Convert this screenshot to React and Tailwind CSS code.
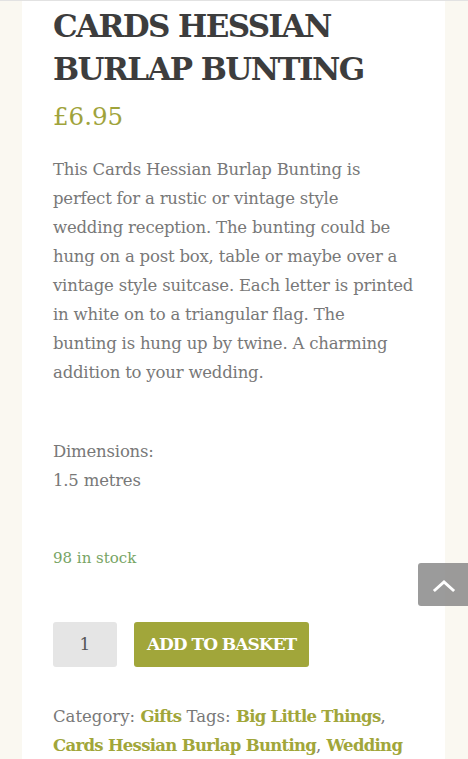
import React from "react";

const description = [
  "This Cards Hessian Burlap Bunting is",
  "perfect for a rustic or vintage style",
  "wedding reception. The bunting could be",
  "hung on a post box, table or maybe over a",
  "vintage style suitcase. Each letter is printed",
  "in white on to a triangular flag. The",
  "bunting is hung up by twine. A charming",
  "addition to your wedding.",
];

export default function App() {
  const serif = { fontFamily: '"DejaVu Serif", "Liberation Serif", serif' };
  return (
    <div className="w-[468px] h-[759px] overflow-hidden bg-[#faf8f1] border-t border-[#e2e2e2] relative" style={serif}>
      <div className="ml-[22px] w-[423px] h-full bg-white pl-[31px] pr-[17px]">
        <h1 className="pt-[4px] text-[31px] leading-[43px] font-bold text-[#3d3d3d] tracking-[-1.6px]">
          CARDS HESSIAN BURLAP BUNTING
        </h1>
        <p className="mt-[8px] text-[24.5px] leading-[36px] text-[#9fa33b]">£6.95</p>
        <p className="mt-[20px] text-[16.5px] leading-[29px] text-[#787878] tracking-[-0.2px]">
          {description.map((line) => (
            <span key={line} className="block whitespace-nowrap">
              {line}
            </span>
          ))}
        </p>
        <p className="mt-[50px] text-[16.5px] leading-[29px] text-[#787878] tracking-[-0.2px]">
          Dimensions:
          <br />
          1.5 metres
        </p>
        <p className="mt-[51px] text-[15px] leading-[24px] text-[#77a464]">98 in stock</p>
        <div className="mt-[52px] flex items-center gap-[17px]">
          <div className="w-[64px] h-[45px] rounded-[3px] bg-[#e5e5e5] flex items-center justify-center text-[17px] text-[#555]">
            1
          </div>
          <button className="h-[45px] w-[175px] rounded-[3px] bg-[#a1a63a] text-white font-bold text-[17px] tracking-[-1px]">
            ADD TO BASKET
          </button>
        </div>
        <p className="mt-[35px] text-[16.5px] leading-[29px] text-[#787878] w-[375px]">
          Category: <span className="font-bold text-[#a1a63a] tracking-[-0.7px]">Gifts</span> Tags:{" "}
          <span className="font-bold text-[#a1a63a] tracking-[-0.7px]">Big Little Things</span>,{" "}
          <span className="font-bold text-[#a1a63a] tracking-[-0.7px]">Cards Hessian Burlap Bunting</span>,{" "}
          <span className="font-bold text-[#a1a63a] tracking-[-0.7px]">Wedding</span>
        </p>
      </div>
      <div className="absolute left-[418px] top-[562px] w-[52px] h-[43px] rounded-l-[3px] bg-[#8a8a8a]/85 flex items-center justify-center">
        <svg width="26" height="16" viewBox="0 0 26 16" fill="none" stroke="white" strokeWidth="3" strokeLinecap="square">
          <path d="M4 13 L13 5 L22 13" />
        </svg>
      </div>
    </div>
  );
}
